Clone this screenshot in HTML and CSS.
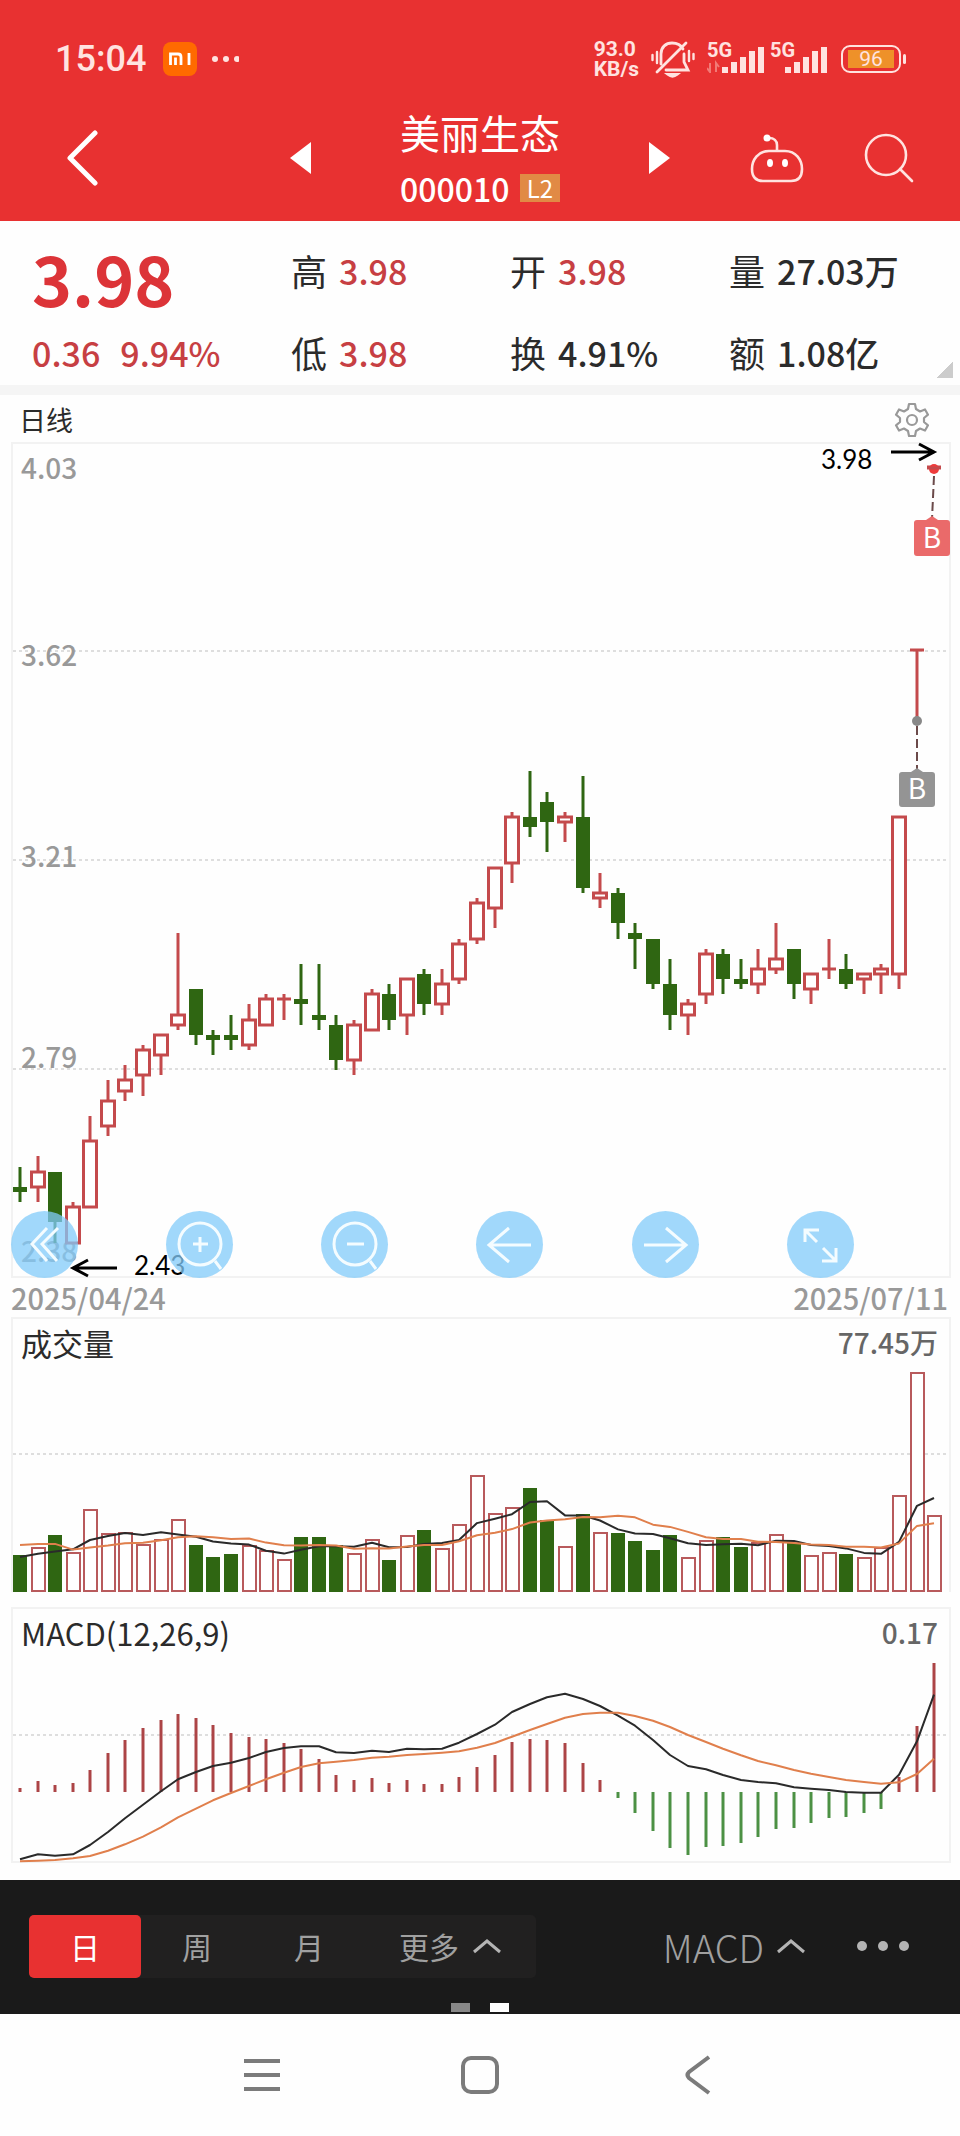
FILE: index.html
```html
<!DOCTYPE html>
<html lang="zh-CN">
<head>
    <meta charset="UTF-8">
    <meta name="viewport" content="width=device-width, initial-scale=1.0">
    <title>美丽生态 000010</title>
    <link rel="stylesheet" href="styles.css">
</head>
<body>
    <header class="top">
        <div class="status-bar">
            <span class="clock">15:04</span>
            <svg class="mi" width="34" height="34" viewBox="0 0 34 34">
                <rect width="34" height="34" rx="8" fill="#ff6a00"/>
                <path d="M7.500 23V12h7.500q3 0 3 3v8M12.500 15.500V23M26 11v12" fill="none" stroke="#fff" stroke-width="2.800"/>
            </svg>
            <svg width="28" height="8" viewBox="0 0 28 8" fill="#ffe3e0">
                <circle cx="4" cy="4" r="3"/><circle cx="15" cy="4" r="3"/><circle cx="26" cy="4" r="3"/>
            </svg>
            <div class="status-right">
                <div class="speed"><span>93.0</span><span>KB/s</span></div>
                <svg width="44" height="38" viewBox="0 0 44 38" fill="none" stroke="#ffe3e0" stroke-width="2.800" stroke-linecap="round">
                    <path d="M10 24V14C10 7 15 3 21 3c5 0 9 2 11 6M33 14v8l4 8H15M6 32L35 3"/>
                    <path d="M17 34.500h9q-4.500 3.500-9 0z" fill="#ffe3e0"/>
                    <path d="M6 12v11M1.500 15v5M38 11v10M42.500 14v5" stroke-width="2.400"/>
                </svg>
                <div class="signal">
                    <span>5G</span>
                    <svg width="58" height="28" viewBox="0 0 58 28" fill="#ffe3e0">
                        <path d="M3 18v9l-3-4M9 27v-9l3 4" fill="none" stroke="#f27a76" stroke-width="2"/>
                        <path d="M15 22h6v6h-6zM24 17h6v11h-6zM33 12h6v16h-6zM42 6h6v22h-6zM51 2h6v26h-6z"/>
                    </svg>
                </div>
                <div class="signal">
                    <span>5G</span>
                    <svg width="58" height="28" viewBox="0 0 58 28" fill="#ffe3e0">
                        <path d="M15 22h6v6h-6zM24 17h6v11h-6zM33 12h6v16h-6zM42 6h6v22h-6zM51 2h6v26h-6z"/>
                    </svg>
                </div>
                <div class="battery"><span>96</span></div>
            </div>
        </div>
        <div class="title-bar">
            <button type="button" class="back" aria-label="返回">
                <svg width="32" height="56" viewBox="0 0 32 56" fill="none" stroke="#fff" stroke-width="5" stroke-linecap="round" stroke-linejoin="round"><path d="M29 3L4 28l25 25"/></svg>
            </button>
            <div class="stock">
                <button type="button" aria-label="上一只"><svg width="21" height="32" viewBox="0 0 21 32" fill="#fff"><path d="M21 0v32L0 16z"/></svg></button>
                <div class="stock-name">
                    <h1>美丽生态</h1>
                    <p><span>000010</span><b>L2</b></p>
                </div>
                <button type="button" aria-label="下一只"><svg width="21" height="32" viewBox="0 0 21 32" fill="#fff"><path d="M0 0v32l21-16z"/></svg></button>
            </div>
            <div class="actions">
                <button type="button" aria-label="助手">
                    <svg width="54" height="50" viewBox="0 0 54 50" fill="none" stroke="#ffe3e0" stroke-width="2.600">
                        <path d="M19 18h16c11 0 17 9 17 18 0 8-4 12-11 12H13C6 48 2 44 2 36 2 27 8 18 19 18zM27 17V12c0-4-3-7-8-7"/>
                        <circle cx="17" cy="5" r="3.500" fill="#fff" stroke="none"/>
                        <ellipse cx="20" cy="30" rx="3" ry="4" fill="#fff" stroke="none"/>
                        <ellipse cx="35" cy="30" rx="3" ry="4" fill="#fff" stroke="none"/>
                    </svg>
                </button>
                <button type="button" aria-label="搜索">
                    <svg width="50" height="50" viewBox="0 0 50 50" fill="none" stroke="#ffe3e0" stroke-width="2.600" stroke-linecap="round"><circle cx="22" cy="22" r="20"/><path d="M36 36l12 12"/></svg>
                </button>
            </div>
        </div>
    </header>

    <main>
        <section class="quote">
            <strong class="price">3.98</strong>
            <dl><dt>高</dt><dd class="up">3.98</dd></dl>
            <dl><dt>开</dt><dd class="up">3.98</dd></dl>
            <dl><dt>量</dt><dd>27.03万</dd></dl>
            <p class="change up"><span>0.36</span><span>9.94%</span></p>
            <dl><dt>低</dt><dd class="up">3.98</dd></dl>
            <dl><dt>换</dt><dd>4.91%</dd></dl>
            <dl><dt>额</dt><dd>1.08亿</dd></dl>
        </section>

        <section class="charts">
            <div class="chart-head">
                <h2>日线</h2>
                <button type="button" aria-label="设置">
                    <svg width="36" height="36" viewBox="0 0 36 36" fill="none" stroke="#999" stroke-width="2.200" stroke-linejoin="round">
                        <path d="M15 2h6l1 5 4 2.500 5-2 3 5.200-4 3.300v4l4 3.300-3 5.200-5-2-4 2.500-1 5h-6l-1-5-4-2.500-5 2-3-5.200 4-3.300v-4l-4-3.300 3-5.200 5 2L14 7z"/>
                        <circle cx="18" cy="18" r="5"/>
                    </svg>
                </button>
            </div>
            <div class="panel">
                <svg class="chart" id="kline" viewBox="0 0 936 832"></svg>
                <div class="tools">
                    <button type="button" aria-label="最早"><svg viewBox="0 0 66 66"><path d="M35 16L20 32l15 17M46 16L30 32l15 17"/></svg></button>
                    <button type="button" aria-label="放大"><svg viewBox="0 0 66 66"><circle cx="33" cy="32" r="21"/><path d="M33 25v15M26 32h15M48 49l6 8"/></svg></button>
                    <button type="button" aria-label="缩小"><svg viewBox="0 0 66 66"><circle cx="33" cy="32" r="21"/><path d="M25 32h17M48 49l6 8"/></svg></button>
                    <button type="button" aria-label="左移"><svg viewBox="0 0 66 66"><path d="M54 33H13M32 16L12 33l20 17"/></svg></button>
                    <button type="button" aria-label="右移"><svg viewBox="0 0 66 66"><path d="M12 33h41M34 16l20 17-20 17"/></svg></button>
                    <button type="button" aria-label="全屏"><svg viewBox="0 0 66 66"><path d="M30 30L18 18M18 30V18h14M36 36l13 13M49 36v13H35"/></svg></button>
                </div>
            </div>
            <div class="dates"><time>2025/04/24</time><time>2025/07/11</time></div>
            <div class="panel volume">
                <div class="panel-head"><h2>成交量</h2><span>77.45万</span></div>
                <svg class="chart" id="volume" viewBox="0 0 936 221"></svg>
            </div>
            <div class="panel">
                <div class="panel-head"><h2>MACD(12,26,9)</h2><span>0.17</span></div>
                <svg class="chart" id="macd" viewBox="0 0 936 200"></svg>
            </div>
        </section>
    </main>

    <div class="toolbar">
        <div class="periods">
            <button type="button" class="active">日</button>
            <button type="button">周</button>
            <button type="button">月</button>
            <button type="button" class="more">更多
                <svg width="30" height="16" viewBox="0 0 30 16"><path d="M2 14L15 3l13 11"/></svg>
            </button>
        </div>
        <div class="indicator">
            <button type="button">MACD
                <svg width="30" height="16" viewBox="0 0 30 16"><path d="M2 14L15 3l13 11"/></svg>
            </button>
            <button type="button" aria-label="更多指标">
                <svg class="dots" width="54" height="12" viewBox="0 0 54 12"><circle cx="6" cy="6" r="5"/><circle cx="27" cy="6" r="5"/><circle cx="48" cy="6" r="5"/></svg>
            </button>
        </div>
        <div class="pager"><i></i><i class="on"></i></div>
    </div>

    <nav class="system-nav">
        <button type="button" aria-label="任务"><svg width="40" height="40" viewBox="0 0 40 40"><path d="M2 6h36M2 20h36M2 34h36"/></svg></button>
        <button type="button" aria-label="主页"><svg width="40" height="40" viewBox="0 0 40 40"><rect x="3" y="3" width="34" height="34" rx="8"/></svg></button>
        <button type="button" aria-label="后退"><svg width="40" height="40" viewBox="0 0 40 40"><path d="M31 2L11 17q-3 3 0 6l20 15"/></svg></button>
    </nav>
    <script src="script.js"></script>
</body>
</html>
```
FILE: styles.css
```css
* {
    box-sizing: border-box;
}

body {
    margin: 0;
    background-color: #fefefe;
    color: #2b2b2b;
    font-family: "Noto Sans CJK SC", "Liberation Sans", sans-serif;
}

h1, h2, p, dl, dd {
    margin: 0;
    font-weight: normal;
}

button {
    display: flex;
    align-items: center;
    justify-content: center;
    padding: 0;
    border: none;
    background: none;
    color: inherit;
    font: inherit;
    cursor: pointer;
}

svg {
    display: block;
}

/* Header */
.top {
    background-color: #e83131;
    color: #fff;
}

.status-bar {
    display: flex;
    align-items: center;
    height: 90px;
    padding: 28px 55px 0;
    color: #ffe3e0;
    font-family: Roboto, sans-serif;
}

.clock {
    font-size: 36px;
    font-weight: 500;
}

.mi {
    margin: 0 14px 0 17px;
}

.status-right {
    display: flex;
    align-items: center;
    margin-left: auto;
    padding-right: 4px;
}

.speed {
    display: grid;
    margin-right: 12px;
    font-size: 21px;
    font-weight: bold;
    line-height: 20px;
}

.signal {
    position: relative;
    margin-left: 5px;
}

.status-right svg + .signal {
    margin-left: 12px;
}

.signal span {
    position: absolute;
    top: -5px;
    left: 0;
    font-size: 20px;
    font-weight: bold;
    line-height: 20px;
}

.battery {
    position: relative;
    width: 60px;
    height: 28px;
    margin-left: 13px;
    padding: 3px 5px;
    border: 2px solid #ffe3e0;
    border-radius: 9px;
}

.battery::after {
    content: "";
    position: absolute;
    top: 7px;
    right: -7px;
    width: 3px;
    height: 10px;
    border-radius: 2px;
    background-color: #ffe3e0;
}

.battery span {
    display: block;
    height: 18px;
    background-color: #ee9129;
    font-size: 21px;
    line-height: 18px;
    text-align: center;
}

.title-bar {
    display: grid;
    grid-template-columns: 1fr 380px 1fr;
    align-items: center;
    height: 131px;
    padding-top: 4px;
}

.back {
    width: 32px;
    margin-left: 66px;
}

.stock {
    display: flex;
    align-items: center;
    justify-content: space-between;
}

.stock-name {
    padding-top: 4px;
}

.stock-name h1 {
    font-size: 40px;
    line-height: 56px;
}

.stock-name p {
    display: flex;
    align-items: center;
    justify-content: space-between;
    font-size: 32px;
    font-weight: 500;
    line-height: 56px;
}

.stock-name b {
    padding: 0 7px;
    background-color: #e18a45;
    font-size: 24px;
    font-weight: normal;
    line-height: 28px;
}

.actions {
    display: flex;
    justify-content: flex-end;
    gap: 60px;
    padding-right: 46px;
}

/* Quote */
.quote {
    display: grid;
    grid-template-columns: 259fr 219fr 219fr 231fr;
    grid-template-rows: 98px 66px;
    align-items: center;
    padding-left: 32px;
    background: linear-gradient(135deg, transparent 50%, #ccc 50%) no-repeat right 7px bottom 7px / 16px 16px;
    font-size: 34px;
}

.quote dl {
    display: flex;
    align-items: center;
    gap: 12px;
}

.quote dt {
    font-size: 36px;
}

.quote dd {
    font-weight: 500;
}

.price {
    padding-top: 16px;
    color: #dc3438;
    font-size: 68px;
    font-weight: bold;
    line-height: 80px;
}

.change {
    display: flex;
    gap: 20px;
    font-weight: 500;
}

.quote .up {
    color: #c73f43;
}

/* Charts */
.charts {
    padding: 0 9px 17px 11px;
    border-top: 10px solid #f5f5f5;
}

.chart-head {
    display: flex;
    align-items: center;
    justify-content: space-between;
    height: 47px;
    padding: 2px 21px 0 8px;
}

.chart-head h2 {
    font-size: 27px;
}

.panel {
    position: relative;
    border: 2px solid #f2f2f2;
}

.volume {
    margin-bottom: 15px;
    border-bottom: none;
}

.panel-head {
    display: flex;
    align-items: center;
    justify-content: space-between;
    height: 52px;
    padding: 0 11px 6px 8px;
}

.panel-head h2 {
    font-size: 31px;
}

.panel-head span {
    color: #666;
    font-size: 28px;
    font-weight: 500;
}

.chart {
    width: 100%;
    height: auto;
    overflow: visible;
}

.grid {
    stroke: #dedede;
    stroke-width: 2;
    stroke-dasharray: 3 3;
}

.rise {
    fill: #fff;
    stroke: #c44a4c;
    stroke-width: 3;
}

.fall {
    fill: #2f6612;
    stroke: none;
}

.wick-rise {
    stroke: #c44a4c;
    stroke-width: 3;
}

.wick-fall {
    stroke: #2f6612;
    stroke-width: 3;
}

#volume .rise {
    stroke: #b85a5c;
    stroke-width: 2;
}

.bar-up {
    stroke: #ac4446;
    stroke-width: 3;
}

.bar-down {
    stroke: #4c9144;
    stroke-width: 3;
}

.fast, .slow {
    fill: none;
    stroke: #2a2a2a;
    stroke-width: 2;
    stroke-linejoin: round;
}

.slow {
    stroke: #e07f4c;
}

.axis {
    fill: #999;
    font-size: 28px;
    font-weight: 500;
}

.note {
    fill: #000;
    font-family: Lato, sans-serif;
    font-size: 26px;
}

.arrow {
    fill: none;
    stroke: #000;
    stroke-width: 3;
}

.tag {
    fill: #fff;
    font-size: 28px;
    text-anchor: middle;
}

.lead {
    stroke: #6b4a4a;
    stroke-width: 2;
    stroke-dasharray: 9 4;
}

.tools {
    position: absolute;
    right: 0;
    bottom: -2px;
    left: -2px;
    display: grid;
    grid-template-columns: repeat(6, 155fr) 7fr;
}

.tools button {
    width: 67px;
    height: 67px;
    border-radius: 50%;
    background-color: rgba(130, 203, 250, 0.75);
}

.tools svg {
    width: 66px;
    height: 66px;
    fill: none;
    stroke: #f4fcff;
    stroke-width: 3;
}

.dates {
    display: flex;
    justify-content: space-between;
    padding: 0 3px 0 0;
    color: #999;
    font-size: 29px;
    font-weight: 500;
    line-height: 39px;
}

/* Bottom bars */
.toolbar {
    position: relative;
    display: flex;
    align-items: center;
    justify-content: space-between;
    height: 134px;
    padding: 0 50px 2px 29px;
    background-color: #1a1a1a;
    color: #a0a0a0;
    font-size: 30px;
}

.toolbar svg {
    fill: none;
    stroke: #b4b4b4;
    stroke-width: 3;
}

.periods {
    display: flex;
    border-radius: 5px;
    background-color: #212020;
}

.periods button {
    width: 112px;
    height: 63px;
    border-radius: 5px;
}

.periods .active {
    background-color: #e83131;
    color: #fff;
}

.periods .more {
    width: 171px;
    gap: 13px;
}

.indicator {
    display: flex;
    gap: 50px;
}

.indicator button {
    gap: 12px;
    font-size: 38px;
    font-weight: 300;
}

.toolbar .dots {
    fill: #b4b4b4;
    stroke: none;
}

.pager {
    position: absolute;
    right: 0;
    bottom: 2px;
    left: 0;
    display: flex;
    justify-content: center;
    gap: 20px;
}

.pager i {
    width: 19px;
    height: 9px;
    background-color: #888;
}

.pager .on {
    background-color: #fff;
}

.system-nav {
    display: flex;
    justify-content: center;
    gap: 178px;
    padding: 41px 0;
}

.system-nav svg {
    fill: none;
    stroke: #7b7b7b;
    stroke-width: 4;
}
```
FILE: script.js
```javascript
// open, close, high, low, volume (万手)
const days = [
    [2.56, 2.55, 2.60, 2.53, 13.0], [2.56, 2.59, 2.62, 2.53, 15.5], [2.59, 2.49, 2.59, 2.45, 20.3],
    [2.45, 2.52, 2.53, 2.45, 13.9], [2.52, 2.65, 2.70, 2.52, 29.1], [2.68, 2.73, 2.77, 2.66, 20.4],
    [2.75, 2.77, 2.80, 2.73, 20.8], [2.78, 2.83, 2.84, 2.74, 16.7], [2.82, 2.86, 2.86, 2.78, 18.4],
    [2.88, 2.90, 3.06, 2.87, 25.3], [2.95, 2.86, 2.95, 2.84, 16.5], [2.86, 2.85, 2.87, 2.82, 12.4],
    [2.86, 2.85, 2.90, 2.83, 13.3], [2.84, 2.89, 2.92, 2.83, 16.3], [2.88, 2.93, 2.94, 2.88, 14.4],
    [2.93, 2.93, 2.94, 2.89, 11.4], [2.93, 2.92, 3.00, 2.88, 19.3], [2.90, 2.89, 3.00, 2.87, 19.3],
    [2.88, 2.81, 2.90, 2.79, 16.5], [2.81, 2.88, 2.89, 2.78, 13.4], [2.87, 2.94, 2.95, 2.87, 18.5],
    [2.94, 2.89, 2.96, 2.87, 11.4], [2.90, 2.97, 2.97, 2.86, 19.8], [2.98, 2.92, 2.99, 2.90, 21.8],
    [2.92, 2.96, 2.99, 2.90, 15.2], [2.97, 3.04, 3.05, 2.96, 23.8], [3.05, 3.12, 3.13, 3.04, 41.1],
    [3.11, 3.19, 3.19, 3.07, 27.6], [3.20, 3.29, 3.30, 3.16, 29.8], [3.29, 3.27, 3.38, 3.25, 36.7],
    [3.32, 3.28, 3.34, 3.22, 25.3], [3.28, 3.29, 3.30, 3.24, 15.9], [3.29, 3.15, 3.37, 3.14, 27.4],
    [3.13, 3.14, 3.18, 3.11, 21.0], [3.14, 3.08, 3.15, 3.05, 21.0], [3.06, 3.05, 3.08, 2.99, 18.0],
    [3.05, 2.96, 3.05, 2.95, 15.0], [2.96, 2.90, 3.01, 2.87, 20.0], [2.90, 2.92, 2.93, 2.86, 12.1],
    [2.94, 3.02, 3.03, 2.92, 17.9], [3.02, 2.97, 3.03, 2.94, 19.4], [2.97, 2.96, 3.01, 2.95, 15.9],
    [2.96, 2.99, 3.03, 2.94, 17.4], [2.99, 3.01, 3.08, 2.98, 20.0], [3.03, 2.96, 3.03, 2.93, 17.3],
    [2.95, 2.98, 2.98, 2.92, 12.7], [2.99, 2.99, 3.05, 2.97, 13.7], [2.99, 2.96, 3.02, 2.95, 13.3],
    [2.97, 2.98, 2.98, 2.94, 12.1], [2.98, 2.99, 3.00, 2.94, 15.7], [2.98, 3.29, 3.29, 2.95, 33.8],
    [3.62, 3.62, 3.62, 3.48, 77.45], [3.98, 3.98, 3.98, 3.98, 27.03]
];
// averages of the first days need volumes from before the window
const ma5Start = [12.4, 13.5, 14.3, 15.1];
const ma10Start = [16.6, 17, 17, 15, 15.7, 16.4, 17.2, 17.4, 18.3];

const hist = [13, 34, 22, 26, 66, 116, 155, 193, 217, 234, 222, 201, 178, 166, 160, 147, 129, 99, 51, 37, 43, 27, 35, 25, 25, 46, 76, 110, 150, 159, 157, 146, 87, 37, -17, -62, -118, -167, -190, -165, -161, -153, -134, -112, -107, -93, -79, -74, -64, -50, 45, 198, 387];
const dif = [-202, -187, -191, -187, -159, -120, -79, -38, 2, 38, 60, 78, 88, 102, 120, 132, 137, 137, 119, 117, 124, 120, 130, 128, 130, 148, 174, 202, 240, 264, 284, 295, 279, 258, 229, 199, 156, 111, 78, 68, 51, 36, 30, 26, 14, 10, 6, 0, -2, -2, 52, 152, 292];
const dea = [-208, -206, -204, -199, -192, -176, -157, -134, -106, -76, -50, -25, -3, 18, 38, 58, 75, 86, 91, 96, 103, 106, 111, 114, 118, 122, 133, 147, 166, 186, 204, 223, 234, 238, 238, 228, 214, 195, 171, 150, 130, 110, 93, 80, 66, 55, 45, 36, 30, 25, 29, 54, 100];

const x = i => Math.round(7 + i * 17.58);
const priceY = p => Math.round((4.03 - p) * 506.7 - 2);
const line = (cls, x1, y1, x2, y2) => `<line class="${cls}" x1="${x1}" y1="${y1}" x2="${x2}" y2="${y2}"/>`;
const curve = (cls, list, y) => `<polyline class="${cls}" points="${list.map((v, i) => x(i) + ',' + y(v).toFixed(1)).join(' ')}"/>`;
const text = (cls, tx, ty, s) => `<text class="${cls}" x="${tx}" y="${ty}">${s}</text>`;

function average(n, start) {
    return days.map((d, i) => i < n - 1 ? start[i] : days.slice(i - n + 1, i + 1).reduce((s, r) => s + r[4], 0) / n);
}

function drawKline() {
    let out = '';
    [207, 416, 625].forEach(y => out += line('grid', 0, y, 936, y));
    [['4.03', 35], ['3.62', 222], ['3.21', 423], ['2.79', 624], ['2.38', 818]].forEach(([s, y]) => out += text('axis', 8, y, s));
    days.forEach(([open, close, high, low], i) => {
        const cx = x(i);
        const top = priceY(Math.max(open, close));
        const bottom = priceY(Math.min(open, close));
        const up = close >= open;
        out += line(up ? 'wick-rise' : 'wick-fall', cx, priceY(high), cx, priceY(low));
        if (open === close) {
            out += line('wick-rise', cx - 7, top, cx + 7, top);
        } else if (up) {
            out += `<rect class="rise" x="${cx - 6.5}" y="${top}" width="13" height="${bottom - top}"/>`;
        } else {
            out += `<rect class="fall" x="${cx - 7}" y="${top}" width="14" height="${bottom - top}"/>`;
        }
    });

    // highest and lowest marks
    out += text('note', 808, 25, '3.98') + '<path class="arrow" d="M878 8h42M906 0l15 8-15 8"/>';
    out += text('note', 121, 831, '2.43') + '<path class="arrow" d="M104 824H61M75 816l-15 8 15 8"/>';

    // buy marks
    out += '<circle cx="921" cy="25" r="5" fill="#ee3b3b"/>' + line('wick-rise', 914, 24, 928, 24) + line('lead', 921, 32, 919, 75);
    out += '<path d="M904 76h9l6-4 6 4h9q3 0 3 3v30q0 3-3 3h-30q-3 0-3-3V79q0-3 3-3z" fill="#ea6a6a"/>' + text('tag', 919, 104, 'B');
    out += '<circle cx="904" cy="277" r="5" fill="#888"/>' + line('lead', 904, 282, 904, 325);
    out += '<path d="M889 328h9l6-4 6 4h9q3 0 3 3v29q0 3-3 3h-30q-3 0-3-3v-29q0-3 3-3z" fill="#949494"/>' + text('tag', 904, 355, 'B');
    document.getElementById('kline').innerHTML = out;
}

function drawVolume() {
    const y = v => 221 - v * 2.83;
    let out = line('grid', 0, 83, 936, 83);
    days.forEach(([open, close, , , volume], i) => {
        const top = Math.round(y(volume));
        out += close >= open
            ? `<rect class="rise" x="${x(i) - 6}" y="${top}" width="13" height="${220 - top}"/>`
            : `<rect class="fall" x="${x(i) - 7}" y="${top}" width="14" height="${221 - top}"/>`;
    });
    out += curve('fast', average(5, ma5Start), y) + curve('slow', average(10, ma10Start), y);
    document.getElementById('volume').innerHTML = out;
}

function drawMacd() {
    const y = v => 131 - v / 3;
    let out = line('grid', 0, 74, 936, 74);
    hist.forEach((v, i) => out += line(v > 0 ? 'bar-up' : 'bar-down', x(i), 131, x(i), Math.round(y(v))));
    out += curve('fast', dif, y) + curve('slow', dea, y);
    document.getElementById('macd').innerHTML = out;
}

drawKline();
drawVolume();
drawMacd();
```
